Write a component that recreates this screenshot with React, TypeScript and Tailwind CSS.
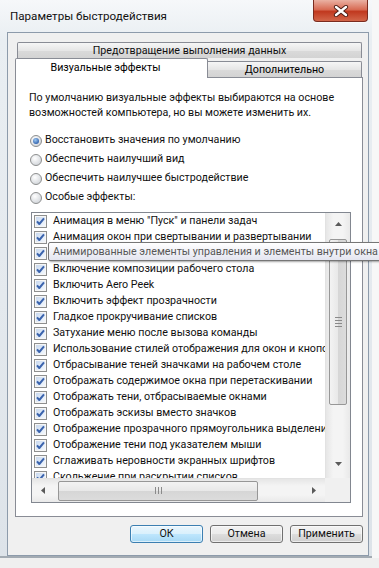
import React from "react";

const items = [
  "Анимация в меню \"Пуск\" и панели задач",
  "Анимация окон при свертывании и развертывании",
  "Анимированные элементы управления и элементы внутри окна",
  "Включение композиции рабочего стола",
  "Включить Aero Peek",
  "Включить эффект прозрачности",
  "Гладкое прокручивание списков",
  "Затухание меню после вызова команды",
  "Использование стилей отображения для окон и кнопок",
  "Отбрасывание теней значками на рабочем столе",
  "Отображать содержимое окна при перетаскивании",
  "Отображать тени, отбрасываемые окнами",
  "Отображать эскизы вместо значков",
  "Отображение прозрачного прямоугольника выделения",
  "Отображение тени под указателем мыши",
  "Сглаживать неровности экранных шрифтов",
  "Скольжение при раскрытии списков",
];

function CheckBox() {
  return (
    <svg width="13" height="13" viewBox="0 0 13 13" className="shrink-0">
      <defs>
        <linearGradient id="cbg" x1="0" y1="0" x2="1" y2="1">
          <stop offset="0" stopColor="#c9d9ef" />
          <stop offset="1" stopColor="#f4f8fd" />
        </linearGradient>
      </defs>
      <rect x="0.5" y="0.5" width="12" height="12" fill="#f6f6f6" stroke="#8e8f8f" />
      <rect x="2" y="2" width="9" height="9" fill="url(#cbg)" />
      <path d="M3 6.3 L5.3 9 L10 3.4" stroke="#3a63ad" strokeWidth="2" fill="none" strokeLinejoin="round" />
    </svg>
  );
}

function Radio({ checked }: { checked?: boolean }) {
  return (
    <svg width="12" height="12" viewBox="0 0 12 12" className="shrink-0">
      <defs>
        <radialGradient id="rfill" cx="0.4" cy="0.35" r="0.7">
          <stop offset="0" stopColor="#ffffff" />
          <stop offset="1" stopColor="#cfd3d8" />
        </radialGradient>
        <radialGradient id="rdot" cx="0.4" cy="0.35" r="0.7">
          <stop offset="0" stopColor="#9cc8f2" />
          <stop offset="1" stopColor="#2a5ba8" />
        </radialGradient>
      </defs>
      <circle cx="6" cy="6" r="5.5" fill="url(#rfill)" stroke="#8e8f8f" />
      {checked && <circle cx="6" cy="6" r="3" fill="url(#rdot)" />}
    </svg>
  );
}

function Tri({ dir }: { dir: "up" | "down" | "left" | "right" }) {
  const pts =
    dir === "up"
      ? "0,4 3.5,0 7,4"
      : dir === "down"
      ? "0,0 7,0 3.5,4"
      : dir === "left"
      ? "4,0 4,7 0,3.5"
      : "0,0 4,3.5 0,7";
  const w = dir === "up" || dir === "down" ? 7 : 4;
  const h = dir === "up" || dir === "down" ? 4 : 7;
  return (
    <svg width={w} height={h} viewBox={`0 0 ${w} ${h}`}>
      <polygon points={pts} fill="#5a5a5a" />
    </svg>
  );
}

function CloseX() {
  return (
    <svg width="16" height="12" viewBox="0 0 16 12">
      <path d="M3 2 L13 10 M13 2 L3 10" stroke="#4a1c14" strokeWidth="4.2" strokeLinecap="round" />
      <path d="M3 2 L13 10 M13 2 L3 10" stroke="#ffffff" strokeWidth="2.4" strokeLinecap="round" />
    </svg>
  );
}

const btn =
  "w-[73px] h-[18px] rounded-[3px] border shadow-[inset_0_0_0_1px_rgba(255,255,255,0.6)] text-[10.7px] leading-[16px] text-[#111] font-['Roboto',sans-serif]";

export default function App() {
  return (
    <div className="relative w-[379px] h-[568px] overflow-hidden bg-[#efefef] text-[10.7px] text-black font-['Roboto',sans-serif]">
      <div className="flex">
        <div className="w-[372px] h-[558px] flex flex-col bg-[linear-gradient(to_bottom,#f6f8fa_0px,#e9eef2_40px,#e4e9ee_300px,#dde3e9_100%)] border-b-[2px] border-[#a3abb3]">
          {/* title bar */}
          <div className="h-[32px] flex justify-between items-start shrink-0">
            <span className="pl-[10px] pt-[8px] leading-[16px] text-[11.6px] text-[#111]">Параметры быстродействия</span>
            <div className="mr-[4px] w-[55px] h-[22px] rounded-b-[4px] border border-t-0 border-[#7a2b1f] bg-[linear-gradient(to_bottom,#eab1a3_0%,#d86c55_45%,#c1391f_55%,#d2664a_100%)] flex items-center justify-center shadow-[0_1px_1px_rgba(255,255,255,0.7)]">
              <CloseX />
            </div>
          </div>
          {/* client */}
          <div className="ml-[7px] w-[362px] h-[524px] border border-[#8d9bab] bg-[#f0f0f0] flex flex-col pl-[7px] pt-[9px]">
            <div className="w-[348px] flex flex-col">
              {/* back tab row */}
              <div className="ml-[2px] w-[345px] h-[16px] border border-b-0 border-[#898c95] rounded-t-[2px] bg-[linear-gradient(to_bottom,#f6f6f6,#e6e6e6_50%,#dadada_51%,#d3d3d3)] text-center leading-[15px] text-[#111]">
                Предотвращение выполнения данных
              </div>
              {/* front tab row */}
              <div className="flex items-end h-[19px]">
                <div className="relative z-10 w-[193px] h-[20px] -mb-[1px] border border-b-0 border-[#898c95] bg-white text-center leading-[18px] rounded-t-[2px]">
                  <span className="relative left-[-6px]">Визуальные эффекты</span>
                </div>
                <div className="w-[154px] h-[16px] border border-l-0 border-b-0 border-[#898c95] rounded-tr-[2px] bg-[linear-gradient(to_bottom,#f6f6f6,#e6e6e6_50%,#dadada_51%,#d3d3d3)] text-center leading-[15px]">
                  Дополнительно
                </div>
              </div>
              {/* panel */}
              <div className="h-[440px] border border-[#898c95] bg-white flex flex-col">
                <div className="pl-[13px] pt-[12px] leading-[15px] whitespace-nowrap text-[#111]">
                  <div>По умолчанию визуальные эффекты выбираются на основе</div>
                  <div>возможностей компьютера, но вы можете изменить их.</div>
                </div>
                <div className="mt-[11px] flex flex-col">
                  {[
                    ["Восстановить значения по умолчанию", true],
                    ["Обеспечить наилучший вид", false],
                    ["Обеспечить наилучшее быстродействие", false],
                    ["Особые эффекты:", false],
                  ].map(([t, c]) => (
                    <div key={t as string} className="h-[19px] flex items-center pl-[14px] gap-[3px] text-[#111]">
                      <Radio checked={c as boolean} />
                      <span>{t as string}</span>
                    </div>
                  ))}
                </div>
                {/* listbox */}
                <div className="mt-[5px] ml-[15px] w-[320px] h-[291px] border border-[#828790] flex flex-col">
                  <div className="flex flex-1 min-h-0">
                    <div className="flex-1 overflow-hidden flex flex-col">
                      {items.map((t) => (
                        <div key={t} className="h-[16px] shrink-0 flex items-center pl-[2px] gap-[6px] whitespace-nowrap text-[#111]">
                          <CheckBox />
                          <span>{t}</span>
                        </div>
                      ))}
                    </div>
                    {/* vertical scrollbar */}
                    <div className="w-[25px] flex flex-col border-l border-[#e2e2e2] bg-[linear-gradient(to_right,#e6e6e6,#f4f4f4_30%,#f4f4f4_70%,#e9e9e9)]">
                      <div className="h-[22px] flex items-center justify-center">
                        <Tri dir="up" />
                      </div>
                      <div className="mt-[4px] mx-[3px] h-[166px] rounded-[2px] border border-[#979797] bg-[linear-gradient(to_right,#f3f3f3,#e8e8e8_50%,#d6d6d6_51%,#dcdcdc)] flex flex-col items-center justify-center gap-[2px]">
                        <div className="w-[7px] h-[1px] bg-[#8a8a8a]" />
                        <div className="w-[7px] h-[1px] bg-[#8a8a8a]" />
                        <div className="w-[7px] h-[1px] bg-[#8a8a8a]" />
                        <div className="w-[7px] h-[1px] bg-[#8a8a8a]" />
                      </div>
                      <div className="flex-1" />
                      <div className="h-[22px] flex items-start justify-center pt-[6px]">
                        <Tri dir="down" />
                      </div>
                    </div>
                  </div>
                  {/* horizontal scrollbar */}
                  <div className="h-[24px] flex">
                    <div className="flex-1 flex items-center bg-[linear-gradient(to_bottom,#e6e6e6,#f4f4f4_30%,#f4f4f4_70%,#e9e9e9)] border-t border-[#e2e2e2]">
                      <div className="w-[22px] h-full flex items-center justify-center">
                        <Tri dir="left" />
                      </div>
                      <div className="ml-[4px] w-[200px] h-[20px] rounded-[2px] border border-[#979797] bg-[linear-gradient(to_bottom,#f3f3f3,#e8e8e8_50%,#d6d6d6_51%,#dcdcdc)] flex items-center justify-center gap-[2px]">
                        <div className="w-[1px] h-[7px] bg-[#8a8a8a]" />
                        <div className="w-[1px] h-[7px] bg-[#8a8a8a]" />
                        <div className="w-[1px] h-[7px] bg-[#8a8a8a]" />
                      </div>
                      <div className="flex-1" />
                      <div className="w-[22px] h-full flex items-center justify-center">
                        <Tri dir="right" />
                      </div>
                    </div>
                    <div className="w-[25px] bg-[#f0f0f0]" />
                  </div>
                </div>
              </div>
              {/* buttons */}
              <div className="mt-[8px] flex justify-end gap-[7px]">
                <button className={btn + " border-[#3c7fb1] bg-[linear-gradient(to_bottom,#eaf6fd,#d9f0fc_50%,#bee6fd_51%,#a7d9f5)]"}>
                  ОК
                </button>
                <button className={btn + " border-[#707070] bg-[linear-gradient(to_bottom,#f2f2f2,#ebebeb_50%,#dddddd_51%,#cfcfcf)]"}>
                  Отмена
                </button>
                <button className={btn + " border-[#707070] bg-[linear-gradient(to_bottom,#f2f2f2,#ebebeb_50%,#dddddd_51%,#cfcfcf)]"}>
                  Применить
                </button>
              </div>
            </div>
          </div>
        </div>
        <div className="flex-1 h-[558px] bg-[#f7f7f7]" />
      </div>
      {/* tooltip */}
      <div className="absolute left-[48px] top-[242px] w-[360px] h-[19px] border border-[#767676] rounded-[2px] bg-[linear-gradient(to_bottom,#ffffff,#e4e5f0)] shadow-[1px_1px_2px_rgba(0,0,0,0.35)] pl-[4px] leading-[17px] whitespace-nowrap text-[#575757]">
        Анимированные элементы управления и элементы внутри окна
      </div>
    </div>
  );
}
